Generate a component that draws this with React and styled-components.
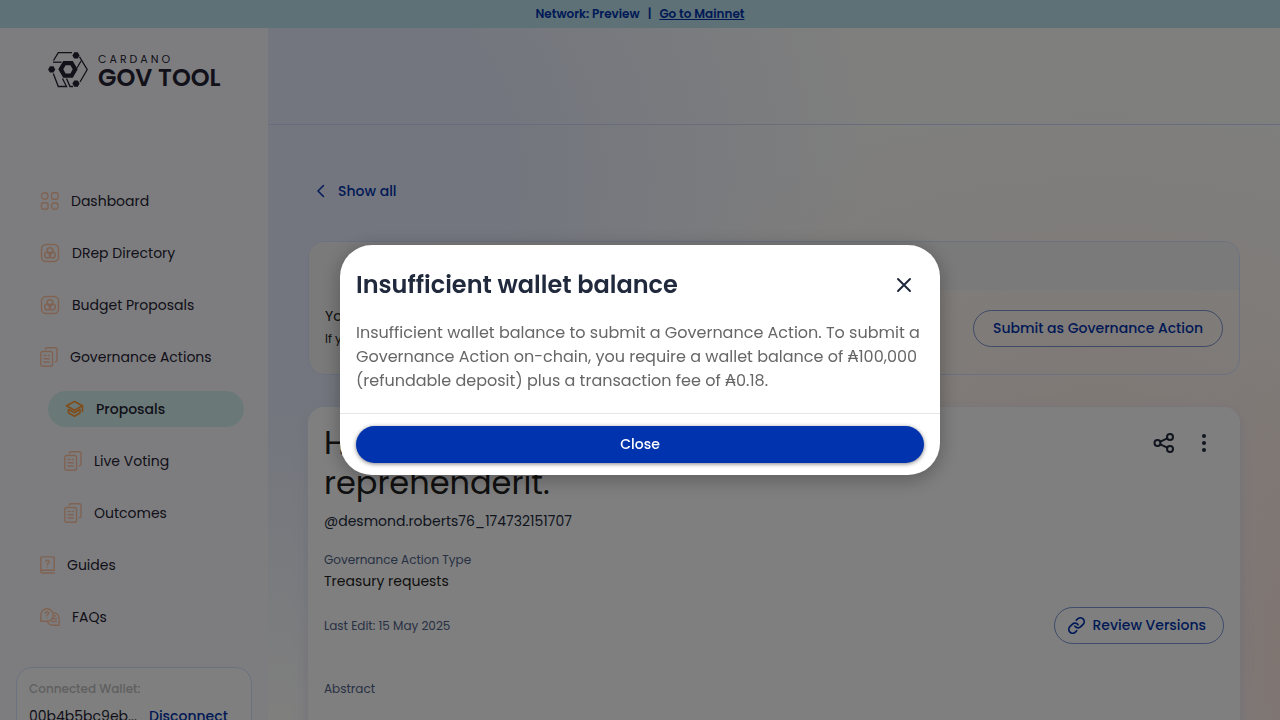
import React from "react";
import styled, { createGlobalStyle, css } from "styled-components";

const Global = createGlobalStyle`
  *, *::before, *::after { box-sizing: border-box; }
  html, body { margin: 0; overflow: hidden; }
  body, button { font-family: Poppins, Inter, "Open Sans", sans-serif; }
  h1, h2, p { margin: 0; padding: 0; }
  svg { display: block; flex: none; }
`;

const Page = styled.div`
  height: 100vh;
  overflow: hidden;
  display: flex;
  flex-direction: column;
  color: #242232;
  background:
    radial-gradient(ellipse 16% 50% at 104% 94%, #ffe6de 0%, #ffeae200 100%),
    radial-gradient(ellipse 44% 46% at 86% 60%, #fff2ea 0%, #fff4ec00 100%),
    radial-gradient(ellipse 50% 75% at 18% 24%, #e6ecfc 0%, #e7edfc 45%, #eef2fc00 100%),
    #fefefd;
`;

const Banner = styled.div`
  flex: none;
  height: 28px;
  display: flex;
  justify-content: center;
  align-items: center;
  gap: 8px;
  background: #bbe3ee;
  color: #0033ad;
  font-size: 12px;
  font-weight: 600;
`;

const BannerLink = styled.a`
  color: inherit;
`;

const Body = styled.div`
  flex: 1;
  min-height: 0;
  display: flex;
`;

const Sidebar = styled.aside`
  flex: none;
  width: 268px;
  overflow: hidden;
  background: #fbfbff;
`;

const Brand = styled.a`
  display: flex;
  gap: 10px;
  height: 155px;
  padding: 24px 40px 0 48px;
  color: #242232;
  text-decoration: none;
`;

const BrandText = styled.span`
  display: flex;
  flex-direction: column;
`;

const BrandSmall = styled.span`
  font-size: 11px;
  line-height: 14px;
  font-weight: 400;
  letter-spacing: 3px;
`;

const BrandLarge = styled.span`
  font-size: 24px;
  line-height: 24px;
  font-weight: 600;
  white-space: nowrap;
`;

const Nav = styled.nav`
  display: flex;
  flex-direction: column;
  gap: 16px;
  padding: 0 24px;
`;

const NavItem = styled.a`
  display: flex;
  align-items: center;
  gap: 12px;
  height: 36px;
  padding: 0 16px;
  margin-left: ${(p) => (p.$nested ? "24px" : "0")};
  border-radius: 18px;
  color: #242232;
  font-size: 14px;
  text-decoration: none;
  svg { color: #ffc5a3; }
  ${(p) =>
    p.$active &&
    css`
      background: #d4f3f1;
      font-weight: 500;
      svg { color: #ff9933; }
    `}
`;

const Wallet = styled.section`
  margin: 32px 16px 0;
  padding: 12px;
  height: 96px;
  border: 1px solid #d6e2ff;
  border-radius: 16px;
  background: #ffffff;
`;

const WalletLabel = styled.p`
  font-size: 12px;
  line-height: 18px;
  font-weight: 500;
  color: #bfbfbf;
`;

const WalletRow = styled.div`
  display: flex;
  align-items: center;
  gap: 12px;
  margin-top: 4px;
  font-size: 14px;
  line-height: 28px;
`;

const WalletAddress = styled.span`
  width: 108px;
  overflow: hidden;
  white-space: nowrap;
`;

const TextButton = styled.button`
  display: flex;
  align-items: center;
  gap: 12px;
  padding: 0;
  border: 0;
  background: none;
  color: #0033ad;
  font-size: 14px;
  font-weight: 500;
`;

const Main = styled.main`
  flex: 1;
  min-width: 0;
`;

const TopBar = styled.header`
  height: 97px;
  border-bottom: 1px solid #d0d8f8;
`;

const Content = styled.div`
  padding: 48px 40px 0;
`;

const BackRow = styled.div`
  display: flex;
  height: 36px;
  padding-left: 8px;
  margin-bottom: 32px;
`;

const Notice = styled.section`
  overflow: hidden;
  border: 1px solid #d6e2ff;
  border-radius: 16px;
  background: linear-gradient(90deg, #f5f5f6 0%, #f5f5f600 60%);
`;

const NoticeHead = styled.div`
  height: 48px;
  background: #f5f5f6;
`;

const NoticeBody = styled.div`
  display: flex;
  justify-content: space-between;
  align-items: center;
  height: 84px;
  padding: 0 16px 8px;
`;

const NoticeText = styled.div`
  display: flex;
  flex-direction: column;
  color: #212121;
`;

const NoticeTitle = styled.p`
  font-size: 14px;
  line-height: 22px;
`;

const NoticeHint = styled.p`
  font-size: 12px;
  line-height: 24px;
`;

const OutlineButton = styled.button`
  display: flex;
  align-items: center;
  gap: 8px;
  height: 37px;
  padding: 0 ${(p) => (p.$icon ? "17px 0 13px" : "19px")};
  border: 1px solid #0033ad80;
  border-radius: 19px;
  background: none;
  color: #0033ad;
  font-size: 14px;
  font-weight: 500;
  white-space: nowrap;
`;

const Proposal = styled.article`
  display: flex;
  flex-direction: column;
  height: 560px;
  margin-top: 32px;
  padding: 16px;
  border-radius: 16px;
  background: #ffffff;
  box-shadow: 0 4px 15px 0 #dcdcf4b3;
`;

const ProposalHead = styled.div`
  display: flex;
  justify-content: space-between;
`;

const ProposalTitle = styled.h1`
  display: flex;
  flex-direction: column;
  font-size: 32px;
  line-height: 40px;
  font-weight: 400;
  color: #212121;
`;

const Actions = styled.div`
  display: flex;
  height: 40px;
`;

const IconButton = styled.button`
  display: grid;
  place-items: center;
  width: 40px;
  height: 40px;
  padding: 0;
  border: 0;
  background: none;
  color: #212a3d;
`;

const Author = styled.p`
  margin-top: 8px;
  font-size: 14px;
  line-height: 20px;
  color: #212a3d;
`;

const Label = styled.p`
  font-size: 12px;
  line-height: 20px;
  color: #506288;
`;

const Field = styled.div`
  margin-top: 19px;
`;

const Value = styled.p`
  font-size: 14px;
  line-height: 22px;
  color: #212121;
`;

const EditRow = styled.div`
  display: flex;
  justify-content: space-between;
  align-items: center;
  margin: 15px 0 35px;
`;

const Backdrop = styled.div`
  position: fixed;
  inset: 0;
  display: grid;
  place-items: center;
  padding: 32px;
  background: rgba(0, 0, 0, 0.5);
`;

const Dialog = styled.section`
  width: 100%;
  max-width: 600px;
  border-radius: 32px;
  background: #ffffff;
  box-shadow: 0 4px 20px rgba(0, 0, 0, 0.3);
`;

const DialogHead = styled.header`
  display: flex;
  justify-content: space-between;
  align-items: center;
  padding: 20px 16px 16px;
`;

const DialogTitle = styled.h2`
  font-size: 24px;
  line-height: 40px;
  font-weight: 600;
  color: #212a3d;
`;

const DialogText = styled.p`
  padding: 0 16px 20px;
  font-size: 16px;
  line-height: 24px;
  color: #666666;
`;

const DialogFoot = styled.footer`
  padding: 12px 16px;
  border-top: 1px solid #e5e5e5;
`;

const PrimaryButton = styled.button`
  width: 100%;
  height: 37px;
  padding: 0;
  border: 0;
  border-radius: 19px;
  background: #0033ad;
  color: #ffffff;
  font-size: 14px;
  font-weight: 500;
  box-shadow: 0 1px 4px rgba(0, 0, 0, 0.5);
`;

const line = {
  fill: "none",
  stroke: "currentColor",
  strokeLinecap: "round",
  strokeLinejoin: "round",
  "aria-hidden": true,
};

const LogoMark = () => (
  <svg width="40" height="36" viewBox="0 0 40 36" aria-hidden="true">
    <g fill="none" stroke="currentColor" strokeWidth="1.3">
      <path d="M5.500 8.500L10.300 .7H24" />
      <path d="M31.500 4.800L39.200 17.500L32 30" />
      <path d="M33 9L29 16" />
      <path d="M5 10.200H13.500" />
      <path d="M5.300 21.500L10.300 34.500H18.500L14.500 26.500" />
      <path d="M18.500 26.500L22 34.500H25" />
    </g>
    <path
      fill="currentColor"
      fillRule="evenodd"
      d="M15.200 9H24.800L29.700 17.300L24.800 25.700H15.200L10.300 17.300ZM17.600 13.200L15.300 17.300L17.600 21.400H22.400L24.700 17.300L22.400 13.200Z"
    />
    <g fill="currentColor">
      <path d="M1.900 14.200H5.500L7.300 17.400L5.500 20.600H1.900L.1 17.400Z" />
      <path d="M26.200 .2H29.800L31.600 3.400L29.800 6.600H26.200L24.400 3.400Z" />
      <path d="M26.200 28.400H29.800L31.600 31.600L29.800 34.800H26.200L24.400 31.600Z" />
    </g>
  </svg>
);

const DashboardIcon = () => (
  <svg {...line} width="19" height="18" viewBox="0 0 19 18" strokeWidth="1.400">
    <circle cx="4.700" cy="4" r="3.300" />
    <rect x="11.500" y=".7" width="6.600" height="6.600" rx="1.800" />
    <rect x="1.400" y="10.700" width="6.600" height="6.600" rx="1.800" />
    <circle cx="14.800" cy="14" r="3.300" />
  </svg>
);

const DirectoryIcon = () => (
  <svg {...line} width="20" height="20" viewBox="0 0 20 20" strokeWidth="1.500">
    <rect x="1.500" y="1.500" width="17" height="17" rx="4.500" />
    <circle cx="10" cy="7.700" r="2.900" />
    <circle cx="7.600" cy="12" r="2.900" />
    <circle cx="12.400" cy="12" r="2.900" />
  </svg>
);

const PagesIcon = () => (
  <svg {...line} width="18" height="20" viewBox="0 0 18 20" strokeWidth="1.400">
    <path d="M5.500 2.300V2Q5.500 .7 6.800 .7H15.500Q17 .7 17 2.200V13Q17 14.700 15.300 14.700" />
    <rect x=".8" y="4.500" width="11.700" height="14.700" rx="1.800" />
    <path d="M4 8.500H6M8.300 8.500H9.300M4 11.800H9.300M4 15H9.300" />
  </svg>
);

const ProposalsIcon = () => (
  <svg {...line} width="20" height="20" viewBox="0 0 20 20" strokeWidth="1.600">
    <path d="M2.500 6.800L10.500 2.500L18.500 6.800L10.500 11.200Z" />
    <path d="M18.500 7V12.500" />
    <path d="M4.500 10.500L10.500 13.800L16 10.500" />
    <path d="M4.500 10.500V14L10.500 17.300L16 14V10.500" />
  </svg>
);

const GuidesIcon = () => (
  <svg {...line} width="15" height="18" viewBox="0 0 15 18" strokeWidth="1.400">
    <path d="M14.200 14.200V2Q14.200 .9 13.200 .9H2Q.8 .9 .8 2.200V15.500M14.200 14.200H2.200Q.8 14.200 .8 15.600T2.200 17H14.200" />
    <path d="M5.800 5.700Q5.900 4.300 7.500 4.300T9.200 5.700Q9.200 6.600 8.200 7.200Q7.500 7.600 7.500 8.500M7.500 10.700V10.800" />
  </svg>
);

const FaqIcon = () => (
  <svg {...line} width="20" height="18" viewBox="0 0 20 18" strokeWidth="1.400">
    <path d="M.8 13.200V6.800A6.200 6.200 0 1 1 7 13.200Z" />
    <path d="M13.300 4.600Q19.200 5.500 19.200 11V17.200H13Q9 17.200 7.400 13.500M14 8H15.500M13 10.700H16.300M11.500 13.500H16.300" />
    <path d="M5.400 5.200Q5.500 3.700 7 3.700T8.700 5.100Q8.700 6 7.700 6.600Q7 7 7 7.800M7 9.700V9.800" />
  </svg>
);

const BackIcon = () => (
  <svg {...line} width="10" height="14" viewBox="0 0 10 14" strokeWidth="1.500">
    <path d="M7.500 1.500L2 7L7.500 12.500" />
  </svg>
);

const ShareIcon = () => (
  <svg {...line} width="24" height="24" viewBox="0 0 24 24" strokeWidth="2">
    <circle cx="5.500" cy="12" r="3" />
    <circle cx="18" cy="6" r="3" />
    <circle cx="18" cy="18" r="3" />
    <path d="M8.300 10.700L15.300 7.300M8.300 13.300L15.300 16.700" />
  </svg>
);

const MoreIcon = () => (
  <svg width="24" height="24" viewBox="0 0 24 24" fill="currentColor" aria-hidden="true">
    <circle cx="12" cy="5" r="2" />
    <circle cx="12" cy="12" r="2" />
    <circle cx="12" cy="19" r="2" />
  </svg>
);

const LinkIcon = () => (
  <svg {...line} width="17" height="17" viewBox="1 1 22 22" strokeWidth="2.200">
    <path d="M10 13a5 5 0 0 0 7.540.540l3-3a5 5 0 0 0-7.070-7.070l-1.720 1.710" />
    <path d="M14 11a5 5 0 0 0-7.540-.540l-3 3a5 5 0 0 0 7.070 7.070l1.710-1.710" />
  </svg>
);

const CloseIcon = () => (
  <svg {...line} width="24" height="24" viewBox="0 0 24 24" strokeWidth="2">
    <path d="M6 6L18 18M18 6L6 18" />
  </svg>
);

const navItems = [
  { label: "Dashboard", icon: DashboardIcon },
  { label: "DRep Directory", icon: DirectoryIcon },
  { label: "Budget Proposals", icon: DirectoryIcon },
  { label: "Governance Actions", icon: PagesIcon },
  { label: "Proposals", icon: ProposalsIcon, nested: true, active: true },
  { label: "Live Voting", icon: PagesIcon, nested: true },
  { label: "Outcomes", icon: PagesIcon, nested: true },
  { label: "Guides", icon: GuidesIcon },
  { label: "FAQs", icon: FaqIcon },
];

export default function App() {
  return (
    <>
      <Global />
      <Page>
        <Banner>
          <span>Network: Preview</span>
          <span>|</span>
          <BannerLink href="#mainnet">Go to Mainnet</BannerLink>
        </Banner>
        <Body>
          <Sidebar>
            <Brand href="#home">
              <LogoMark />
              <BrandText>
                <BrandSmall>CARDANO</BrandSmall>
                <BrandLarge>GOV TOOL</BrandLarge>
              </BrandText>
            </Brand>
            <Nav>
              {navItems.map(({ label, icon: Icon, nested, active }) => (
                <NavItem
                  key={label}
                  href="#nav"
                  $nested={nested}
                  $active={active}
                  aria-current={active ? "page" : undefined}
                >
                  <Icon />
                  {label}
                </NavItem>
              ))}
            </Nav>
            <Wallet>
              <WalletLabel>Connected Wallet:</WalletLabel>
              <WalletRow>
                <WalletAddress>00b4b5bc9eb...</WalletAddress>
                <TextButton type="button">Disconnect</TextButton>
              </WalletRow>
            </Wallet>
          </Sidebar>
          <Main>
            <TopBar />
            <Content>
              <BackRow>
                <TextButton type="button">
                  <BackIcon />
                  Show all
                </TextButton>
              </BackRow>
              <Notice>
                <NoticeHead />
                <NoticeBody>
                  <NoticeText>
                    <NoticeTitle>You</NoticeTitle>
                    <NoticeHint>If you</NoticeHint>
                  </NoticeText>
                  <OutlineButton type="button">Submit as Governance Action</OutlineButton>
                </NoticeBody>
              </Notice>
              <Proposal>
                <ProposalHead>
                  <ProposalTitle>
                    <span>Hic</span>
                    <span>reprehenderit.</span>
                  </ProposalTitle>
                  <Actions>
                    <IconButton type="button" aria-label="Share">
                      <ShareIcon />
                    </IconButton>
                    <IconButton type="button" aria-label="More options">
                      <MoreIcon />
                    </IconButton>
                  </Actions>
                </ProposalHead>
                <Author>@desmond.roberts76_174732151707</Author>
                <Field>
                  <Label>Governance Action Type</Label>
                  <Value>Treasury requests</Value>
                </Field>
                <EditRow>
                  <Label>Last Edit: 15 May 2025</Label>
                  <OutlineButton type="button" $icon>
                    <LinkIcon />
                    Review Versions
                  </OutlineButton>
                </EditRow>
                <Label>Abstract</Label>
              </Proposal>
            </Content>
          </Main>
        </Body>
      </Page>
      <Backdrop>
        <Dialog role="dialog" aria-modal="true" aria-labelledby="dialog-title">
          <DialogHead>
            <DialogTitle id="dialog-title">Insufficient wallet balance</DialogTitle>
            <IconButton type="button" aria-label="Close dialog">
              <CloseIcon />
            </IconButton>
          </DialogHead>
          <DialogText>
            Insufficient wallet balance to submit a Governance Action. To submit a Governance
            Action on-chain, you require a wallet balance of ₳100,000 (refundable deposit) plus a
            transaction fee of ₳0.18.
          </DialogText>
          <DialogFoot>
            <PrimaryButton type="button">Close</PrimaryButton>
          </DialogFoot>
        </Dialog>
      </Backdrop>
    </>
  );
}
